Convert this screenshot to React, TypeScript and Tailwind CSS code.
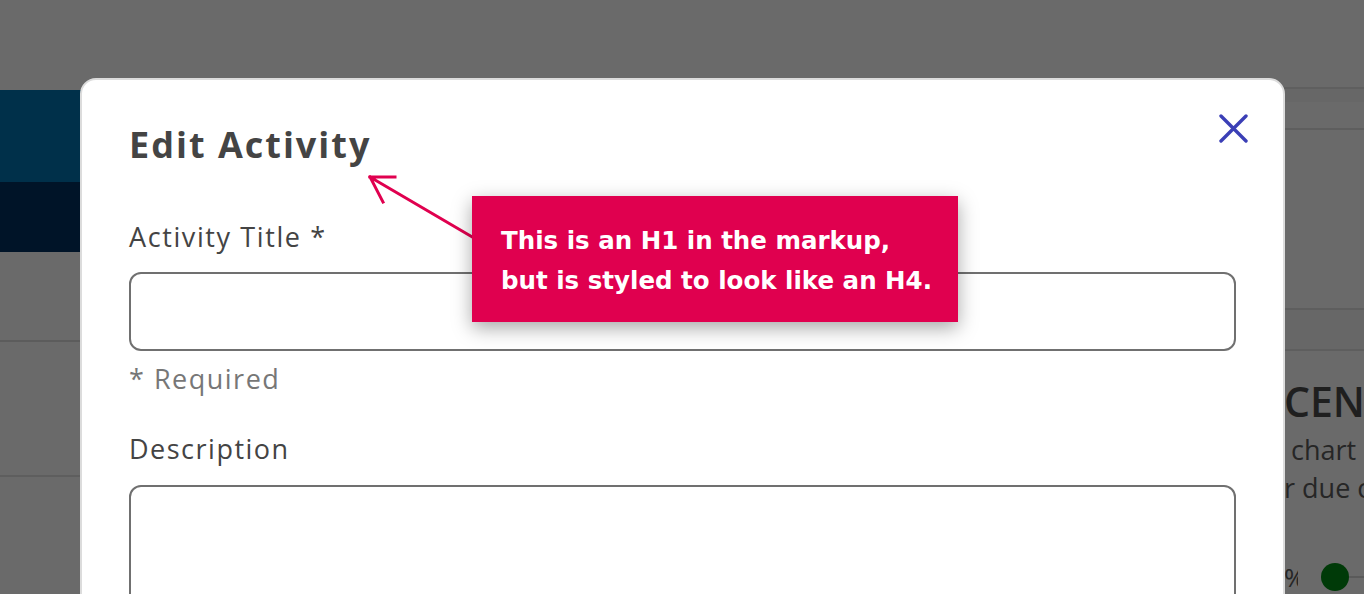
import React from "react";

const modalFont = { fontFamily: '"Open Sans", "Liberation Sans", sans-serif' };

function BackgroundPage() {
  return (
    <div className="flex h-[594px] w-full bg-[#6a6a6a]" style={modalFont}>
      <div className="flex w-[90px] flex-col pt-[90px]">
        <div className="h-[92px] bg-[#00304a]" />
        <div className="h-[70px] bg-[#001428]" />
        <div className="h-[88px]" />
        <div className="h-[2px] bg-[#5c5c5c]" />
        <div className="h-[133px]" />
        <div className="h-[2px] bg-[#5e5e5e]" />
      </div>
      <div className="flex-1" />
      <div className="flex w-[80px] flex-col overflow-hidden pt-[87px]">
        <div className="h-[2px] bg-[#5f5f5f]" />
        <div className="h-[13px] bg-[#676767]" />
        <div className="h-[28px] border-b-2 border-[#5e5e5e]" />
        <div className="h-[178px]" />
        <div className="h-[2px] bg-[#5e5e5e]" />
        <div className="h-[41px] border-b-2 border-[#5e5e5e] bg-[#676767]" />
        <div className="whitespace-nowrap pt-[26px] text-[41px] leading-[48px] font-semibold text-[#1f1f1f]">
          CENT
        </div>
        <div className="whitespace-nowrap pt-[6px] pl-[7px] text-[27px] leading-[38px] text-[#262626]">
          chart
        </div>
        <div className="whitespace-nowrap text-[27px] leading-[38px] text-[#262626]">r due c</div>
        <div className="flex items-center pt-[55px] text-[26px] leading-[30px] text-[#262626]">
          <span className="w-[14px] shrink-0 overflow-hidden text-right">%</span>
          <span className="ml-[23px] h-[28px] w-[28px] shrink-0 rounded-full bg-[#003a08]" />
          <span className="h-[2px] w-[40px] shrink-0 bg-[#5a5a5a]" />
        </div>
      </div>
    </div>
  );
}

function CloseIcon() {
  return (
    <svg width="30" height="30" viewBox="0 0 30 30" fill="none">
      <path d="M2 2 L27 27 M27 2 L2 27" stroke="#3b3fb6" strokeWidth="3.4" strokeLinecap="round" />
    </svg>
  );
}

function Modal() {
  return (
    <div
      className="absolute left-[80px] top-[78px] h-[560px] w-[1205px] rounded-[16px] border-2 border-[#dcdcdc] bg-white px-[47px]"
      style={modalFont}
    >
      <div className="flex items-start justify-between pt-[41px]">
        <h1 className="text-[36px] leading-[48px] font-bold tracking-[2px] text-[#444444]">Edit Activity</h1>
        <button className="mt-[-7px] mr-[-13px]">
          <CloseIcon />
        </button>
      </div>
      <label className="mt-[51px] block text-[27px] leading-[34px] tracking-[1.6px] text-[#444444]">
        Activity Title *
      </label>
      <div className="mt-[18px] h-[79px] w-[1107px] rounded-[12px] border-2 border-[#707070]" />
      <div className="mt-[11px] text-[27px] leading-[34px] tracking-[1.5px] text-[#777777]">* Required</div>
      <label className="mt-[36px] block text-[27px] leading-[34px] font-medium tracking-[1.5px] text-[#444444]">
        Description
      </label>
      <div className="mt-[19px] h-[140px] w-[1107px] rounded-[12px] border-2 border-[#707070]" />
    </div>
  );
}

function Callout() {
  return (
    <>
      <svg className="absolute left-0 top-0" width="1364" height="594" viewBox="0 0 1364 594" fill="none">
        <path d="M474 238 L370 177 M370 177 L395 177 M370 177 L383 202" stroke="#e0004f" strokeWidth="3" strokeLinecap="square" />
      </svg>
      <div
        className="absolute left-[472px] top-[196px] h-[126px] w-[486px] bg-[#e0004f] pl-[29px] pt-[25px] text-[24.5px] leading-[40px] font-bold text-white shadow-[0_6px_18px_rgba(0,0,0,0.35)]"
        style={{ fontFamily: '"DejaVu Sans", "Liberation Sans", sans-serif' }}
      >
        <p>This is an H1 in the markup,</p>
        <p>but is styled to look like an H4.</p>
      </div>
    </>
  );
}

export default function App() {
  return (
    <div className="relative h-[594px] w-[1364px] overflow-hidden">
      <BackgroundPage />
      <Modal />
      <Callout />
    </div>
  );
}
